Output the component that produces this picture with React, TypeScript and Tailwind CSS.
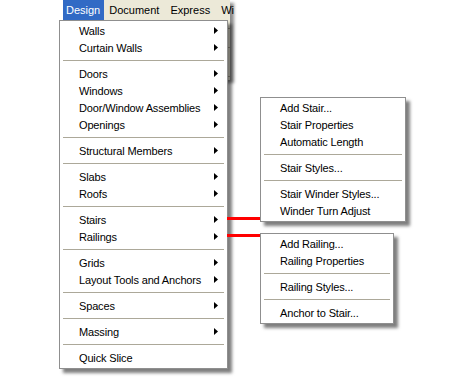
import React from 'react';

type Entry = { label: string; sub?: boolean } | 'sep';

const mainMenu: Entry[] = [
  { label: 'Walls', sub: true },
  { label: 'Curtain Walls', sub: true },
  'sep',
  { label: 'Doors', sub: true },
  { label: 'Windows', sub: true },
  { label: 'Door/Window Assemblies', sub: true },
  { label: 'Openings', sub: true },
  'sep',
  { label: 'Structural Members', sub: true },
  'sep',
  { label: 'Slabs', sub: true },
  { label: 'Roofs', sub: true },
  'sep',
  { label: 'Stairs', sub: true },
  { label: 'Railings', sub: true },
  'sep',
  { label: 'Grids', sub: true },
  { label: 'Layout Tools and Anchors', sub: true },
  'sep',
  { label: 'Spaces', sub: true },
  'sep',
  { label: 'Massing', sub: true },
  'sep',
  { label: 'Quick Slice' },
];

const stairMenu: Entry[] = [
  { label: 'Add Stair...' },
  { label: 'Stair Properties' },
  { label: 'Automatic Length' },
  'sep',
  { label: 'Stair Styles...' },
  'sep',
  { label: 'Stair Winder Styles...' },
  { label: 'Winder Turn Adjust' },
];

const railMenu: Entry[] = [
  { label: 'Add Railing...' },
  { label: 'Railing Properties' },
  'sep',
  { label: 'Railing Styles...' },
  'sep',
  { label: 'Anchor to Stair...' },
];

function Arrow() {
  return (
    <svg width="4" height="7" viewBox="0 0 4 7" className="block">
      <path d="M0 0 L4 3.5 L0 7 Z" fill="#000" />
    </svg>
  );
}

function MenuList({ items }: { items: Entry[] }) {
  return (
    <div className="flex flex-col pt-px pb-[2px]">
      {items.map((it, i) =>
        it === 'sep' ? (
          <div key={i} className="h-[9px] flex items-center px-[3px]">
            <div className="h-px w-full bg-[#aca899]" />
          </div>
        ) : (
          <div key={i} className="h-[17px] flex items-center pl-[19px] pr-[9px]">
            <span className="flex-1 whitespace-nowrap leading-none mt-[2px] tracking-[-0.15px]">{it.label}</span>
            {it.sub && <Arrow />}
          </div>
        )
      )}
    </div>
  );
}

export default function App() {
  return (
    <div
      className="relative w-[450px] h-[378px] bg-white overflow-hidden text-[11px] text-black"
      style={{ fontFamily: '"Liberation Sans", Arial, sans-serif' }}
    >
      {/* window behind the menu */}
      <div className="absolute left-[63px] top-0 w-[167px] h-[80px] bg-[#ece9d8] shadow-[4px_3px_3px_rgba(0,0,0,0.45)]">
        <div className="flex h-[20px] items-center whitespace-nowrap">
          <div className="h-full flex items-center pl-[3px] pr-[4px] bg-[#316ac5] text-white">Design</div>
          <div className="h-full flex items-center pl-[5px] pr-[11px]">Document</div>
          <div className="h-full flex items-center pr-[11px]">Express</div>
          <div className="h-full flex items-center">Wi</div>
        </div>
        <div className="mt-[8px] ml-[150px] h-px bg-[#aca899]" />
        <div className="mt-[18px] ml-[150px] h-px bg-[#aca899]" />
        <div className="mt-[28px] ml-[150px] h-px bg-[#aca899]" />
      </div>

      {/* Design menu */}
      <div className="absolute left-[59px] top-[20px] w-[169px] bg-white border border-[#8f8f8f] shadow-[4px_4px_3px_rgba(0,0,0,0.5)]">
        <MenuList items={mainMenu} />
      </div>

      {/* connector lines */}
      <div className="absolute left-[227px] top-[217px] w-[33px] h-[3px] bg-[#ff0000]" />
      <div className="absolute left-[227px] top-[234px] w-[33px] h-[3px] bg-[#ff0000]" />

      {/* Stairs submenu */}
      <div className="absolute left-[260px] top-[97px] w-[146px] bg-white border border-[#8f8f8f] shadow-[4px_4px_3px_rgba(0,0,0,0.5)]">
        <MenuList items={stairMenu} />
      </div>

      {/* Railings submenu */}
      <div className="absolute left-[260px] top-[233px] w-[134px] bg-white border border-[#8f8f8f] shadow-[4px_4px_3px_rgba(0,0,0,0.5)]">
        <MenuList items={railMenu} />
      </div>
    </div>
  );
}
